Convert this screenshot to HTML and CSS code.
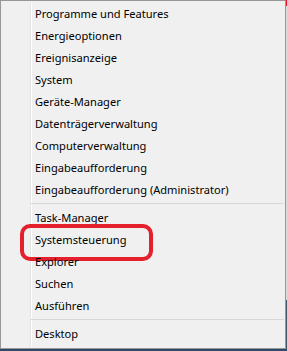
FILE: index.html
```html
<!DOCTYPE html>
<html lang="de">

<head>
    <meta charset="UTF-8">
    <meta name="viewport" content="width=device-width, initial-scale=1.0">
    <title>Win+X Menü</title>
    <link rel="stylesheet" href="styles.css">
</head>

<body>
    <div class="screen">
        <div class="menu">
            <ul class="list">
                <li class="item">Programme und Features</li>
                <li class="item">Energieoptionen</li>
                <li class="item">Ereignisanzeige</li>
                <li class="item">System</li>
                <li class="item">Geräte-Manager</li>
                <li class="item">Datenträgerverwaltung</li>
                <li class="item">Computerverwaltung</li>
                <li class="item">Eingabeaufforderung</li>
                <li class="item">Eingabeaufforderung (Administrator)</li>
                <li class="separator"></li>
                <li class="item">Task-Manager</li>
                <li class="item marked">Systemsteuerung</li>
                <li class="item">Explorer</li>
                <li class="item">Suchen</li>
                <li class="item">Ausführen</li>
                <li class="separator"></li>
                <li class="item">Desktop</li>
            </ul>
        </div>
        <div class="edge"></div>
    </div>
    <div class="taskbar"></div>
</body>

</html>
```

FILE: styles.css
```css
* {
    padding: 0;
    margin: 0;
    box-sizing: border-box;
}

html,
body {
    width: 100%;
    height: 100%;
}

body {
    background-color: #f0f0f0;
    font-family: "Noto Sans", "Open Sans", sans-serif;
    font-size: 11.1px;
    color: #000;
    overflow: hidden;
}

.screen {
    display: flex;
}

.menu {
    width: 286px;
    height: 349px;
    background-color: #f0f0f0;
    border: 1px solid #979797;
    padding: 2px 0 2px 29px;
}

.edge {
    flex: 1;
    height: 349px;
    background: linear-gradient(#e81123 0, #e81123 6px, #dcdcdc 6px, #dcdcdc 300px, #44556a 300px);
}

.taskbar {
    height: 2px;
    background-color: #2f4a66;
}

.list {
    list-style: none;
    height: 100%;
    border-left: 1px solid #e2e3e3;
    box-shadow: inset 1px 0 0 #fff;
}

.item {
    height: 22px;
    line-height: 22px;
    padding-left: 4px;
    white-space: nowrap;
    position: relative;
}

.separator {
    height: 6px;
    margin-right: 1px;
    padding-top: 2px;
}

.separator::after {
    content: "";
    display: block;
    height: 1px;
    background-color: #d7d7d7;
}

.item.marked::after {
    content: "";
    position: absolute;
    left: -11px;
    top: -5px;
    width: 125px;
    height: 29px;
    border: 4px solid #e3202c;
    border-radius: 10px;
}
```
